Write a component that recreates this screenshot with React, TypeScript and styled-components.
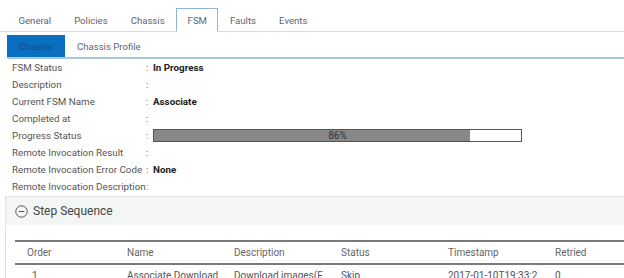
import React from "react";
import styled, { createGlobalStyle } from "styled-components";

const GlobalStyle = createGlobalStyle`
  body {
    margin: 0;
    background: #ffffff;
    font-family: Roboto, "Liberation Sans", Arial, sans-serif;
  }
`;

const tabs = ["General", "Policies", "Chassis", "FSM", "Faults", "Events"];

const fields: { label: string; value?: string; progress?: number }[] = [
  { label: "FSM Status", value: "In Progress" },
  { label: "Description" },
  { label: "Current FSM Name", value: "Associate" },
  { label: "Completed at" },
  { label: "Progress Status", progress: 86 },
  { label: "Remote Invocation Result" },
  { label: "Remote Invocation Error Code", value: "None" },
  { label: "Remote Invocation Description" },
];

const columns = ["Order", "Name", "Description", "Status", "Timestamp", "Retried"];
const rows = [
  ["1", "Associate Download...", "Download images(F...", "Skip", "2017-01-10T19:33:2...", "0"],
];

const App = () => {
  return (
    <>
      <GlobalStyle />
      <Page>
        <TabBar>
          {tabs.map((t) => (
            <Tab key={t} $active={t === "FSM"}>
              {t}
            </Tab>
          ))}
        </TabBar>
        <SubTabBar>
          <SubTab $active>Chassis</SubTab>
          <SubTab>Chassis Profile</SubTab>
        </SubTabBar>
        <Fields>
          {fields.map((f) => (
            <FieldRow key={f.label}>
              <Label>{f.label}</Label>
              <Colon>:</Colon>
              {f.progress !== undefined ? (
                <Progress>
                  <ProgressFill style={{ width: `${f.progress}%` }} />
                  <ProgressText>{f.progress}%</ProgressText>
                </Progress>
              ) : (
                <Value>{f.value}</Value>
              )}
            </FieldRow>
          ))}
        </Fields>
        <Panel>
          <PanelHeader>
            <svg width="13" height="13" viewBox="0 0 13 13">
              <circle cx="6.5" cy="6.5" r="5.7" fill="none" stroke="#555" strokeWidth="1" />
              <line x1="3.6" y1="6.5" x2="9.4" y2="6.5" stroke="#555" strokeWidth="1" />
            </svg>
            <PanelTitle>Step Sequence</PanelTitle>
          </PanelHeader>
          <Table>
            <colgroup>
              <col style={{ width: 105 }} />
              {columns.slice(1).map((c) => (
                <col key={c} style={{ width: 107 }} />
              ))}
            </colgroup>
            <thead>
              <tr>
                {columns.map((c, j) => (
                  <Th key={c} $first={j === 0}>
                    {c}
                  </Th>
                ))}
              </tr>
            </thead>
            <tbody>
              {rows.map((r, i) => (
                <tr key={i}>
                  {r.map((cell, j) => (
                    <Td key={j} $first={j === 0}>
                      {cell}
                    </Td>
                  ))}
                </tr>
              ))}
            </tbody>
          </Table>
        </Panel>
      </Page>
    </>
  );
};

const Page = styled.div`
  width: 624px;
  height: 278px;
  overflow: hidden;
  padding-top: 8px;
  box-sizing: border-box;
`;

const TabBar = styled.div`
  display: flex;
  height: 23px;
  padding-left: 7px;
  border-bottom: 1px solid #dcdcdc;
`;

const Tab = styled.div<{ $active?: boolean }>`
  display: flex;
  align-items: center;
  padding: 0 10.5px;
  font-size: 9.6px;
  color: #5b6772;
  border: 1px solid ${(p) => (p.$active ? "#8fb6d6" : "transparent")};
  border-bottom: ${(p) => (p.$active ? "1px solid #ffffff" : "none")};
  margin-bottom: ${(p) => (p.$active ? "-1px" : "0")};
  background: #ffffff;
`;

const SubTabBar = styled.div`
  display: flex;
  height: 22px;
  margin: 3px 0 0 7px;
  border-bottom: 2px solid #a9c8dd;
`;

const SubTab = styled.div<{ $active?: boolean }>`
  display: flex;
  align-items: center;
  padding: 0 12px;
  font-size: 9.6px;
  background: ${(p) => (p.$active ? "#0a6fc0" : "transparent")};
  color: ${(p) => (p.$active ? "#1b4a78" : "#5b6772")};
`;

const Fields = styled.div`
  padding: 0 0 0 12px;
`;

const FieldRow = styled.div`
  display: grid;
  grid-template-columns: 134px 7px 1fr;
  align-items: center;
  height: 17px;
  font-size: 9.8px;
`;

const Label = styled.div`
  color: #555;
  white-space: nowrap;
`;

const Colon = styled.div`
  color: #666;
`;

const Value = styled.div`
  font-weight: bold;
  color: #222;
`;

const Progress = styled.div`
  position: relative;
  width: 369px;
  height: 13px;
  box-sizing: border-box;
  border: 1px solid #555;
  background: #fff;
`;

const ProgressFill = styled.div`
  height: 100%;
  background: #888;
`;

const ProgressText = styled.div`
  position: absolute;
  inset: 0;
  display: flex;
  align-items: center;
  justify-content: center;
  font-size: 10px;
  color: #333;
`;

const Panel = styled.div`
  margin: 1px 0 0 5px;
  border: 1px solid #e2e2e2;
  border-right: none;
`;

const PanelHeader = styled.div`
  display: flex;
  align-items: center;
  gap: 5px;
  height: 28px;
  padding-left: 9px;
  background: #f4f5f5;
`;

const PanelTitle = styled.div`
  font-size: 12px;
  color: #444;
`;

const Table = styled.table`
  margin: 15px 0 0 9px;
  width: 640px;
  border-collapse: collapse;
  table-layout: fixed;
  border-top: 2px solid #7a7a7a;
  font-size: 10px;
`;

const Th = styled.th<{ $first?: boolean }>`
  height: 21px;
  padding: 0 0 0 ${(p) => (p.$first ? "12px" : "7px")};
  text-align: left;
  font-weight: normal;
  color: #666;
  border-bottom: 2px solid #7a7a7a;
  white-space: nowrap;
`;

const Td = styled.td<{ $first?: boolean }>`
  height: 20px;
  padding: 0 0 0 ${(p) => (p.$first ? "17px" : "7px")};
  color: #555;
  white-space: nowrap;
  overflow: hidden;
`;

export default App;
